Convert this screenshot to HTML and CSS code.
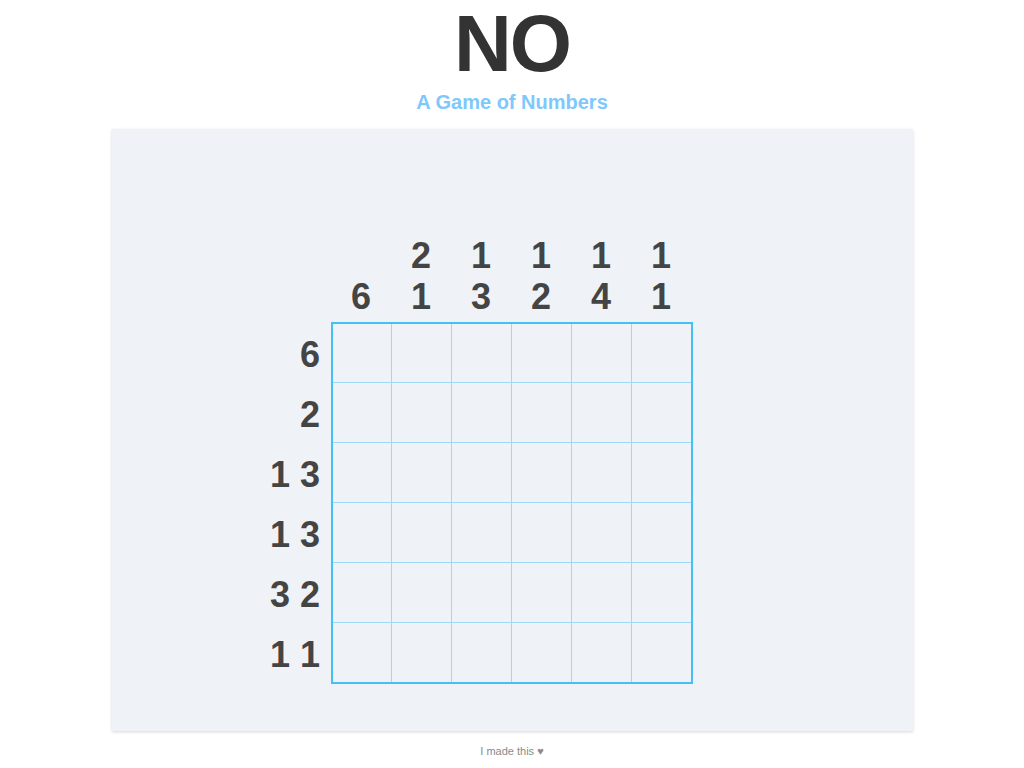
FILE: index.html
```html
<!DOCTYPE html>
<html>
<head>
<meta charset="utf-8">
<title>NO - A Game of Numbers</title>
<link rel="stylesheet" href="styles.css">
</head>
<body>
<header class="header">
  <h1 class="title">NO</h1>
  <h2 class="subtitle">A Game of Numbers</h2>
</header>
<main class="panel">
  <div class="board">
    <div class="col-clues">
      <div class="col-clue"><span>6</span></div>
      <div class="col-clue"><span>2</span><span>1</span></div>
      <div class="col-clue"><span>1</span><span>3</span></div>
      <div class="col-clue"><span>1</span><span>2</span></div>
      <div class="col-clue"><span>1</span><span>4</span></div>
      <div class="col-clue"><span>1</span><span>1</span></div>
    </div>
    <div class="row-clues">
      <div class="row-clue">6</div>
      <div class="row-clue">2</div>
      <div class="row-clue">1 3</div>
      <div class="row-clue">1 3</div>
      <div class="row-clue">3 2</div>
      <div class="row-clue">1 1</div>
    </div>
    <div class="grid">
      <div class="cell"></div><div class="cell"></div><div class="cell"></div><div class="cell"></div><div class="cell"></div><div class="cell"></div>
      <div class="cell"></div><div class="cell"></div><div class="cell"></div><div class="cell"></div><div class="cell"></div><div class="cell"></div>
      <div class="cell"></div><div class="cell"></div><div class="cell"></div><div class="cell"></div><div class="cell"></div><div class="cell"></div>
      <div class="cell"></div><div class="cell"></div><div class="cell"></div><div class="cell"></div><div class="cell"></div><div class="cell"></div>
      <div class="cell"></div><div class="cell"></div><div class="cell"></div><div class="cell"></div><div class="cell"></div><div class="cell"></div>
      <div class="cell"></div><div class="cell"></div><div class="cell"></div><div class="cell"></div><div class="cell"></div><div class="cell"></div>
    </div>
  </div>
</main>
<footer class="footer">I made this ♥</footer>
</body>
</html>
```

FILE: styles.css
```css
html, body {
  margin: 0;
  padding: 0;
  background: #ffffff;
  font-family: "Liberation Sans", Arial, Helvetica, sans-serif;
}

.header {
  text-align: center;
  padding-top: 4px;
}

.title {
  margin: 0;
  font-size: 80px;
  line-height: 80px;
  font-weight: 700;
  color: #333333;
  letter-spacing: -2px;
}

.subtitle {
  margin: 7px 0 0;
  font-size: 20px;
  line-height: 22px;
  font-weight: 700;
  color: #7fc8fb;
}

.panel {
  box-sizing: border-box;
  width: 801px;
  margin: 16px auto 0;
  background: #eff2f7;
  box-shadow: 0 1px 3px rgba(0, 0, 0, 0.16);
  padding: 106px 0 46px;
}

.board {
  display: grid;
  grid-template-columns: 1fr 362px 1fr;
  grid-template-rows: auto auto;
  color: #444444;
  font-weight: 700;
  font-size: 36px;
}

.col-clues {
  grid-column: 2;
  grid-row: 1;
  display: grid;
  grid-template-columns: repeat(6, 60px);
  margin-bottom: 5px;
  align-items: end;
}

.col-clue {
  display: flex;
  flex-direction: column;
  align-items: center;
  line-height: 41px;
}

.row-clues {
  grid-column: 1;
  grid-row: 2;
  justify-self: end;
  display: flex;
  flex-direction: column;
  padding-top: 3px;
  padding-right: 11px;
}

.row-clue {
  height: 60px;
  line-height: 60px;
  text-align: right;
  white-space: pre;
}

.grid {
  grid-column: 2;
  grid-row: 2;
  box-sizing: border-box;
  width: 362px;
  height: 362px;
  border: 2px solid #44c0f5;
  display: grid;
  grid-template-columns: 59px 60px 60px 60px 60px 59px;
  grid-template-rows: 59px 60px 60px 60px 60px 59px;
}

.cell {
  box-sizing: border-box;
  border-right: 1px solid #9dd9f5;
  border-bottom: 1px solid #9dd9f5;
}

.cell:nth-child(6n) {
  border-right: none;
}

.cell:nth-child(n+31) {
  border-bottom: none;
}

.footer {
  text-align: center;
  margin-top: 13px;
  font-size: 11px;
  line-height: 14px;
  color: #8a8a8a;
}
```
